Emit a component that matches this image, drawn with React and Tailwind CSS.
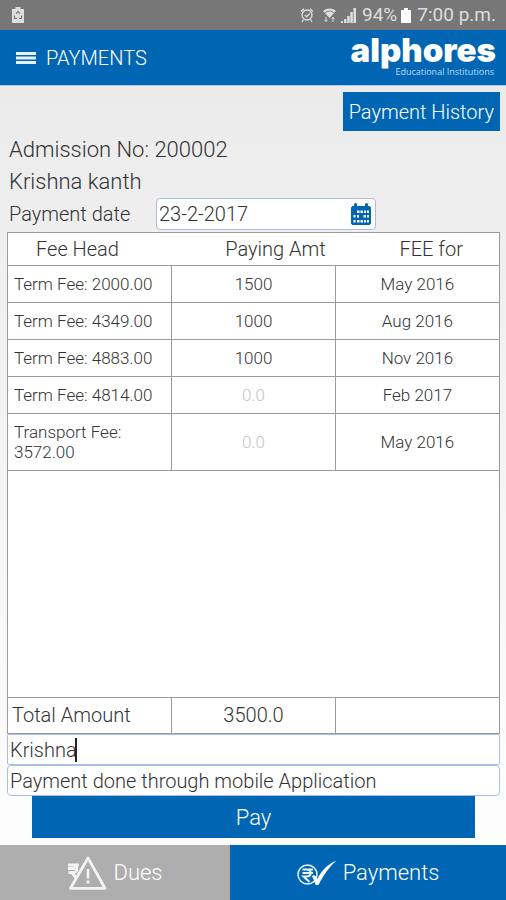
import React, { useState } from "react";

const fees = [
  { head: "Term Fee: 2000.00", amount: "1500", month: "May 2016" },
  { head: "Term Fee: 4349.00", amount: "1000", month: "Aug 2016" },
  { head: "Term Fee: 4883.00", amount: "1000", month: "Nov 2016" },
  { head: "Term Fee: 4814.00", amount: "", month: "Feb 2017" },
  { head: "Transport Fee: 3572.00", amount: "", month: "May 2016" },
];

const StatusBar = () => (
  <div className="flex h-[30px] items-center justify-between bg-[#777777] pr-2.5 pl-3 text-[#dedede]">
    <svg width="12" height="16" viewBox="0 0 12 16" aria-hidden="true">
      <path d="M3.5 0h5v2H12v14H0V2h3.5z" fill="currentColor" />
      <path d="M4 6.5 6 4.5l2 2M9.5 8.5v3H7M2.500 8.500v3H5" fill="none" stroke="#777777" strokeWidth="1.2" />
    </svg>
    <div className="flex items-center">
      <svg className="mr-2" width="14" height="16" viewBox="0 0 14 16" fill="none" stroke="currentColor" strokeWidth="1.3" aria-hidden="true">
        <circle cx="7" cy="8" r="5" />
        <path d="M1 4.500 4 1.700M13 4.500 10 1.700M3.500 12.500 2 15M10.500 12.500 12 15M4.700 8l2 1.800L9.700 6.500" />
      </svg>
      <svg className="mr-1" width="15" height="16" viewBox="0 0 15 16" fill="none" stroke="currentColor" strokeWidth="1" aria-hidden="true">
        <path d="M1 4C5 .7 10 .7 14 4L7.500 11z" fill="currentColor" stroke="none" />
        <path d="M3.200 5.700c2.500-2 6-2 8.600 0" stroke="#777777" />
        <path d="M4 10v4.500M2.500 13 4 14.500 5.500 13M11 15v-4.500M9.500 12 11 10.500l1.500 1.500" />
      </svg>
      <svg className="mr-1.5" width="15" height="15" viewBox="0 0 15 15" fill="currentColor" aria-hidden="true">
        <path d="M0 13h2v2H0zM3 11h2.500v4H3zM6.200 8h2.500v7H6.200zM9.300 4h2.500v11H9.300zM12.500 0H15v15h-2.500z" />
      </svg>
      <span className="text-[19px]">94%</span>
      <svg className="mx-1" width="10" height="15" viewBox="0 0 10 15" fill="#ffffff" aria-hidden="true">
        <path d="M3 0h4v2h3v13H0V2h3z" />
      </svg>
      <span className="ml-0.5 text-[19px]">7:00 p.m.</span>
    </div>
  </div>
);

const Logo = () => (
  <div className="text-white">
    <div className="font-['Inter',sans-serif] text-[33px] leading-7 font-black">alphores</div>
    <div className="pt-1 pr-0.5 text-right font-['Open_Sans',sans-serif] text-[9px] leading-2 text-[#b9dcfa]">Educational Institutions</div>
  </div>
);

const Header = () => (
  <header className="flex h-[55px] items-center justify-between bg-[#0066b3] pr-2.5 pb-1 pl-4 text-white">
    <div className="flex items-center gap-2.5 pt-1">
      <button type="button" aria-label="Menu">
        <svg width="20" height="12" viewBox="0 0 20 12" fill="#e6f2fd">
          <path d="M0 0h20v3H0zM0 4.500h20v3H0zM0 9h20v3H0z" />
        </svg>
      </button>
      <h1 className="text-xl font-light">PAYMENTS</h1>
    </div>
    <Logo />
  </header>
);

const CalendarIcon = () => (
  <svg width="20" height="22" viewBox="0 0 20 22" aria-hidden="true">
    <path d="M3 1.500a1.500 1.500 0 0 1 3 0V3h8V1.500a1.500 1.500 0 0 1 3 0V3h1.500L20 4.500v16L18.500 22h-17L0 20.500v-16L1.500 3H3z" fill="#0066b3" />
    <path d="M6 7.500h2.500V10H6zM9.500 7.500H12V10H9.500zM13 7.500h2V10h-2zM16 7.500h2V10h-2zM2.500 12h2v2.500h-2zM6 12h2v2.500H6zM12.500 12H15v2.500h-2.500zM16 12h2v2.500h-2zM2.500 17h2v2.500h-2zM6 17h2.500v2.500H6zM9.500 17H12v2.500H9.500zM13 17h2v2.500h-2zM16 17h2v2.500h-2z" fill="#ffffff" />
  </svg>
);

const DuesIcon = () => (
  <svg width="40" height="35" viewBox="0 0 40 35" fill="none" stroke="#f4f4f4" aria-hidden="true">
    <path d="M1 10h11M1 13.500h10M1.500 17.500h5M5 10c6.500 0 6.500 8 0 8l5 6" strokeWidth="2.800" />
    <path d="M21 3 38 33.300H3.500z" fill="#aeaeae" strokeWidth="2.800" strokeLinejoin="round" />
    <path d="M21 14v9.500M21 25.500v3" strokeWidth="2.600" />
  </svg>
);

const PaymentsIcon = () => (
  <svg width="40" height="26" viewBox="0 0 40 26" fill="none" stroke="#e9f4ff" aria-hidden="true">
    <circle cx="10.500" cy="14.500" r="9.500" strokeWidth="1.500" />
    <path d="M5.500 9.500h10.500M5.500 13h10.500M6 9.500h3.500c5.500 0 5.500 7 0 7H6.500l6 5.500" strokeWidth="2" />
    <path d="M15 16c2-1.500 4-.5 5.500 3C24 11 31 4 39.500 .5 33 6 26.500 15 21.500 25h-3c-.8-3-2-6-3.500-9z" fill="#ffffff" stroke="none" />
  </svg>
);

const FeeTable = () => (
  <div className="flex grow flex-col border border-[#9b9b9b] bg-white">
    <table className="w-full table-fixed border-collapse font-light text-[#333333]">
      <thead>
        <tr className="h-8 border-b border-[#9b9b9b] text-xl">
          <th className="w-1/3 pl-7 text-left font-light">Fee Head</th>
          <th className="w-1/3 pl-11 font-light">Paying Amt</th>
          <th className="w-1/3 pl-7 font-light">FEE for</th>
        </tr>
      </thead>
      <tbody>
        {fees.map((fee, index) => (
          <tr key={index} className="border-b border-[#9b9b9b] text-[17px] leading-5">
            <td className="border-r border-[#9b9b9b] py-2 pr-1 pl-1.5">{fee.head}</td>
            <td className="border-r border-[#9b9b9b]">
              <input
                aria-label={"Paying amount " + (index + 1)}
                placeholder="0.0"
                defaultValue={fee.amount}
                className="w-full bg-transparent text-center outline-none placeholder:text-[#c4c4c4]"
              />
            </td>
            <td className="text-center">{fee.month}</td>
          </tr>
        ))}
      </tbody>
    </table>
    <div className="grow" />
    <table className="w-full table-fixed border-collapse text-xl font-light text-[#333333]">
      <tbody>
        <tr className="h-9 border-t border-[#9b9b9b]">
          <th scope="row" className="w-1/3 border-r border-[#9b9b9b] pl-1 text-left font-light">Total Amount</th>
          <td className="w-1/3 border-r border-[#9b9b9b] text-center">3500.0</td>
          <td className="w-1/3"></td>
        </tr>
      </tbody>
    </table>
  </div>
);

const App = () => {
  const [name, setName] = useState("Krishna");
  const [note, setNote] = useState("Payment done through mobile Application");

  return (
    <div className="flex min-h-screen flex-col bg-linear-to-b from-[#e9e9e9] to-white font-['Roboto',sans-serif]">
      <StatusBar />
      <Header />
      <main className="flex grow flex-col border-t border-[#a8c8ee] pt-1.5 pr-1.5 pb-[7px] pl-[7px]">
        <button type="button" className="h-[39px] self-end bg-[#0066b3] px-1.5 text-xl font-light text-white">
          Payment History
        </button>
        <div className="px-0.5 pt-[3px] text-[22px] leading-8 font-light text-[#333333]">
          <p>Admission No: 200002</p>
          <p>Krishna kanth</p>
          <div className="flex items-center">
            <label htmlFor="date" className="w-[147px] text-xl">Payment date</label>
            <div className="flex h-8 w-[220px] items-center rounded border border-[#a9bfdd] bg-white pr-1 pl-0.5">
              <input id="date" defaultValue="23-2-2017" className="min-w-0 grow text-xl outline-none" />
              <button type="button" aria-label="Pick date">
                <CalendarIcon />
              </button>
            </div>
          </div>
        </div>
        <div className="mt-0.5 flex grow flex-col">
          <FeeTable />
          <div className="relative">
            <input
              aria-label="Name"
              value={name}
              onChange={(e) => setName(e.target.value)}
              className="block h-[31px] w-full rounded-xs border border-[#a9c0e6] bg-white px-0.5 text-xl font-light text-[#333333] outline-none"
            />
            <span className="absolute top-1 left-[68px] h-6 w-0.5 bg-[#222222]" />
          </div>
          <input
            aria-label="Remarks"
            value={note}
            onChange={(e) => setNote(e.target.value)}
            className="h-[31px] w-full rounded border border-[#a9c0e6] bg-white px-0.5 text-xl font-light text-[#333333] outline-none"
          />
        </div>
        <button type="button" className="mx-[25px] h-[42px] bg-[#0066b3] text-[22px] font-light text-white">
          Pay
        </button>
      </main>
      <nav className="flex h-[55px] text-[22px] font-light text-white">
        <a href="#dues" className="flex w-5/11 items-center justify-center gap-1.5 bg-[#aeaeae]">
          <DuesIcon />
          Dues
        </a>
        <a href="#payments" className="flex grow items-center justify-center gap-1.5 bg-[#0066b3]">
          <PaymentsIcon />
          Payments
        </a>
      </nav>
    </div>
  );
};

export default App;
